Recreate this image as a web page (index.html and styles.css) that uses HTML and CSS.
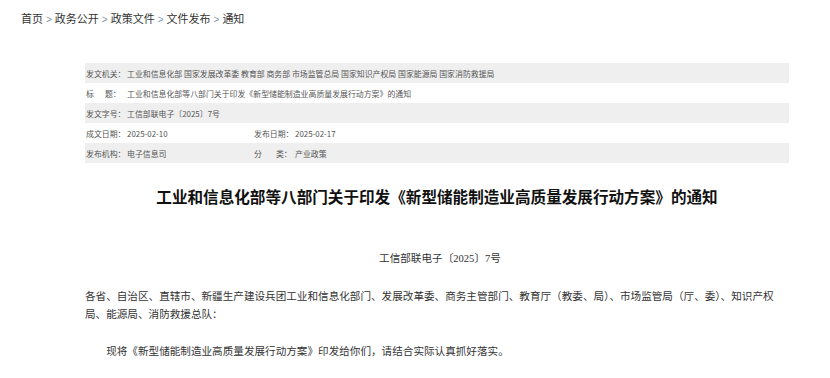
FILE: index.html
```html
<!DOCTYPE html>
<html>
<head>
    <meta charset="utf-8">
    <title>通知</title>
    <link rel="stylesheet" href="styles.css">
</head>
<body>
    <!-- Breadcrumb -->
    <div class="crumb">
        <a>首页</a><span class="sep">&gt;</span><a>政务公开</a><span class="sep">&gt;</span><a>政策文件</a><span class="sep">&gt;</span><a>文件发布</a><span class="sep">&gt;</span><a>通知</a>
    </div>

    <div class="content">
        <!-- Document info table -->
        <div class="meta">
            <div class="row shade">
                <div class="cell full"><span class="label">发文机关：</span><span>工业和信息化部 国家发展改革委 教育部 商务部 市场监管总局 国家知识产权局 国家能源局 国家消防救援局</span></div>
            </div>
            <div class="row">
                <div class="cell full"><span class="label"><span class="wide-a">标</span>题：</span><span>工业和信息化部等八部门关于印发《新型储能制造业高质量发展行动方案》的通知</span></div>
            </div>
            <div class="row shade">
                <div class="cell full"><span class="label">发文字号：</span><span>工信部联电子〔2025〕7号</span></div>
            </div>
            <div class="row">
                <div class="cell"><span class="label">成文日期：</span><span>2025-02-10</span></div>
                <div class="cell"><span class="label">发布日期：</span><span>2025-02-17</span></div>
            </div>
            <div class="row shade">
                <div class="cell"><span class="label">发布机构：</span><span>电子信息司</span></div>
                <div class="cell"><span class="label"><span class="wide-b">分</span>类：</span><span>产业政策</span></div>
            </div>
        </div>

        <h1 class="title">工业和信息化部等八部门关于印发《新型储能制造业高质量发展行动方案》的通知</h1>

        <div class="article">
            <p class="docno">工信部联电子〔2025〕7号</p>
            <p>各省、自治区、直辖市、新疆生产建设兵团工业和信息化部门、发展改革委、商务主管部门、教育厅（教委、局）、市场监管局（厅、委）、知识产权局、能源局、消防救援总队：</p>
            <p class="indent">现将《新型储能制造业高质量发展行动方案》印发给你们，请结合实际认真抓好落实。</p>
        </div>
    </div>
</body>
</html>
```

FILE: styles.css
```css
body {
    margin: 0;
    background: #fff;
    font-family: "Noto Sans CJK SC", sans-serif;
    color: #333;
}

.crumb {
    padding: 9px 0 0 21px;
    height: 27px;
    font-size: 11px;
    line-height: 18px;
    color: #333;
}

.crumb .sep {
    color: #7f95ad;
    font-family: "Liberation Sans", sans-serif;
    font-size: 10px;
    margin: 0 3px;
}

.content {
    margin: 27px 41px 0 85px;
}

.meta {
    font-size: 7.9px;
    color: #555;
}

.row {
    display: flex;
    align-items: center;
    height: 20px;
}

.shade {
    background: #efefef;
}

.cell {
    width: 167px;
    padding-left: 1px;
    white-space: nowrap;
}

.cell.full {
    width: auto;
}

.label {
    display: inline-block;
    width: 41px;
}

.wide-a {
    letter-spacing: 11px;
}

.wide-b {
    letter-spacing: 14px;
}

.title {
    margin: 21px 0 0;
    font-size: 15.6px;
    line-height: 24px;
    font-weight: bold;
    color: #111;
    text-align: center;
}

.article {
    margin-top: 42px;
    font-family: "Liberation Serif", "Noto Sans CJK SC", serif;
    font-size: 10.6px;
    line-height: 18px;
    color: #333;
}

.article p {
    margin: 0 0 19px;
}

.article .docno {
    text-align: center;
    margin-bottom: 20px;
    padding-left: 6px;
}

.article .indent {
    text-indent: 2em;
}
```
